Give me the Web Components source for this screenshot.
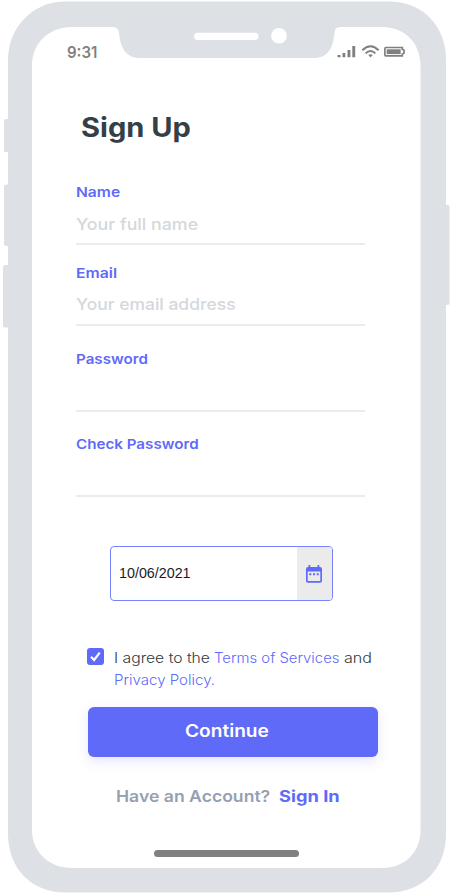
<!DOCTYPE html>
<html lang="en">
<head>
<meta charset="utf-8">
<title>Sign Up</title>
<style>
body { margin: 0; background: #fff; font-family: Inter, "Open Sans", sans-serif; }
</style>
</head>
<body>
<signup-page></signup-page>
<script>
/* A single run of text stretched horizontally to the width given in its "w" attribute. */
customElements.define('fit-text', class extends HTMLElement {
  connectedCallback() {
    const root = this.attachShadow({ mode: 'open' });
    root.innerHTML = `<style>
      :host { display: inline-block; vertical-align: top; white-space: nowrap; }
      span { display: inline-block; transform-origin: 0 50%; }
    </style><span><slot></slot></span>`;
    const span = root.querySelector('span'), w = parseFloat(this.getAttribute('w'));
    this.style.width = w + 'px';
    span.style.transform = `scaleX(${w / span.offsetWidth})`;
  }
});

customElements.define('phone-frame', class extends HTMLElement {
  constructor() {
    super();
    this.attachShadow({ mode: 'open' }).innerHTML = `<style>
      :host { display: block; position: relative; width: 453px; height: 896px; overflow: hidden; }
      svg { position: absolute; inset: 0; }
      .screen { position: relative; height: 100%; box-sizing: border-box; padding: 42px 32px 0; display: flex; flex-direction: column; }
      .home { flex: none; width: 145px; height: 7px; border-radius: 4px; background: #808080; margin: 42px 0 0 122px; }
    </style>
    <svg width="453" height="896" viewBox="0 0 453 896">
      <g fill="#dde1e6">
        <rect x="4" y="119" width="10" height="33" rx="1.5"/>
        <rect x="4" y="184.500" width="10" height="61.500" rx="2"/>
        <rect x="3" y="265" width="10" height="62.500" rx="2"/>
        <rect x="440" y="205" width="9.500" height="100" rx="2"/>
        <path d="M65 1.500H389C424 1.500 446 27 446 60V834C446 869 422 892.500 389 892.500H65C32 892.500 8 869 8 834V60C8 27 33 1.500 65 1.500Z"/>
      </g>
      <path fill="#fff" d="M72 27H112C117 27 118.500 29 119 33C120.500 48 126 58 140 58H314C328 58 333 48 334.500 33C335 29 336 27 341 27H382C405 27 420.500 43 420.500 66V830C420.500 852 405 868 382 868H72C49 868 32 852 32 830V66C32 43 49 27 72 27Z"/>
      <rect x="194" y="32.700" width="64.500" height="7.300" rx="3.650" fill="#fff"/>
      <circle cx="279" cy="35.800" r="7.800" fill="#fff"/>
    </svg>
    <div class="screen"><slot></slot><div class="home"></div></div>`;
  }
});

customElements.define('status-bar', class extends HTMLElement {
  constructor() {
    super();
    this.attachShadow({ mode: 'open' }).innerHTML = `<style>
      :host { display: flex; height: 20px; padding: 0 15px 0 35px; justify-content: space-between; color: #808080; font-size: 16px; line-height: 20px; font-weight: 600; }
      svg { flex: none; }
    </style>
    <fit-text w="30">9:31</fit-text>
    <svg width="70" height="20" viewBox="0 0 70 20" fill="#808080">
      <path d="M1.500 13h3v2.200h-3zM6.500 11h2.800v4.200H6.500zM11.500 8h2.900v7.200h-2.900zM16.300 4h2.900v11.200h-2.900z"/>
      <g fill="none" stroke="#808080" stroke-width="2">
        <path d="M26.300 8.300Q34.500 .2 42.600 8.300"/>
        <path d="M29.600 11.400Q34.500 6.600 39.400 11.400"/>
        <path d="M49.700 5.500H66.300V7.200L68 8.300V11L66.300 12.200V13.900H49.700Q48.900 13.900 48.900 13V6.400Q48.900 5.500 49.700 5.500Z" stroke-width="1.700"/>
      </g>
      <path d="M32.300 13Q34.500 11.700 36.700 13L34.500 15.400Z"/>
      <rect x="50.700" y="7.300" width="14" height="4.800"/>
    </svg>`;
  }
});

customElements.define('form-field', class extends HTMLElement {
  constructor() {
    super();
    this.attachShadow({ mode: 'open' }).innerHTML = `<style>
      :host { display: block; box-sizing: border-box; width: 289px; height: 63px; margin-left: 44px; border-bottom: 2px solid #ebebeb; }
      .label { height: 20px; font-size: 13.700px; line-height: 20px; font-weight: 570; color: #5f6af8; }
      .value { padding-top: var(--value-gap, 10px); font-size: 16.200px; line-height: 24px; font-weight: 500; color: #d4d8dd; }
    </style><div class="label"><slot name="label"></slot></div><div class="value"><slot></slot></div>`;
  }
});

customElements.define('date-field', class extends HTMLElement {
  constructor() {
    super();
    this.attachShadow({ mode: 'open' }).innerHTML = `<style>
      :host { display: flex; box-sizing: border-box; width: 223px; height: 55px; margin: 49px 0 0 77.500px; border: 1px solid #7882fa; border-radius: 4px; overflow: hidden; background: #fff; }
      .date { flex: 1; padding-left: 8.500px; font: 14.500px/52px "Liberation Sans", Arial, sans-serif; color: #1c1c1c; }
      .button { width: 34.500px; background: #ebebeb; display: flex; align-items: center; justify-content: center; }
    </style>
    <div class="date"><slot></slot></div>
    <div class="button"><svg width="18" height="20" viewBox="0 0 18 20">
      <path fill="#5f6af8" fill-rule="evenodd" d="M3.500 1H5.300V3H12.500V1H14.300V3H15Q17 3 17 5V16.700Q17 18.700 15 18.700H3Q1 18.700 1 16.700V5Q1 3 3 3H3.500ZM2.700 7.500V17H15.300V7.500Z"/>
      <path fill="#5f6af8" d="M4.300 9.200h2v2h-2zM8 9.200h2v2H8zM11.700 9.200h2v2h-2z"/>
    </svg></div>`;
  }
});

customElements.define('agree-row', class extends HTMLElement {
  constructor() {
    super();
    this.attachShadow({ mode: 'open' }).innerHTML = `<style>
      :host { display: flex; gap: 9.500px; height: 44px; margin: 46px 0 0 55px; font-size: 14px; line-height: 22px; font-weight: 300; color: #30383e; }
      svg { flex: none; margin-top: 1px; }
      .copy { display: flex; flex-direction: column; }
    </style>
    <svg width="17" height="17" viewBox="0 0 17 17"><rect width="17" height="17" rx="3" fill="#5f6af8"/><path d="M4 8.800L7.100 12L12.700 4.700" fill="none" stroke="#fff" stroke-width="2.200"/></svg>
    <div class="copy"><slot></slot></div>`;
  }
});

customElements.define('primary-button', class extends HTMLElement {
  constructor() {
    super();
    this.attachShadow({ mode: 'open' }).innerHTML = `<style>
      :host { display: block; flex: none; box-sizing: border-box; width: 290px; height: 50px; margin: 16px 0 0 56px; padding-left: 97px; border-radius: 6px; background: #5f6af8; box-shadow: 0 4px 12px rgba(95,106,248,.17); color: #fff; font-size: 17.300px; line-height: 48px; font-weight: 600; }
    </style><slot></slot>`;
  }
});

customElements.define('signup-page', class extends HTMLElement {
  constructor() {
    super();
    this.attachShadow({ mode: 'open' }).innerHTML = `<style>
      :host { display: block; }
      h1 { margin: 45px 0 35px 49px; height: 40px; font-size: 26.700px; line-height: 40px; font-weight: 650; color: #343f48; }
      .email { margin-top: 18px; --value-gap: 9px; }
      .password { margin-top: 23px; }
      .check { margin-top: 22px; }
      .link { color: #5f6af8; }
      .line { display: flex; gap: 4px; }
      .foot { display: flex; gap: 9px; height: 24px; margin: 27px 0 0 84px; font-size: 16px; line-height: 24px; font-weight: 570; color: #969fb0; }
      .foot .link { font-weight: 650; }
    </style>
    <phone-frame>
      <status-bar></status-bar>
      <h1><fit-text w="110">Sign Up</fit-text></h1>
      <form-field><fit-text slot="label" w="44.5">Name</fit-text><fit-text w="122">Your full name</fit-text></form-field>
      <form-field class="email"><fit-text slot="label" w="41.5">Email</fit-text><fit-text w="160">Your email address</fit-text></form-field>
      <form-field class="password"><fit-text slot="label" w="72">Password</fit-text></form-field>
      <form-field class="check"><fit-text slot="label" w="123">Check Password</fit-text></form-field>
      <date-field><fit-text w="72">10/06/2021</fit-text></date-field>
      <agree-row>
        <div class="line"><fit-text w="96.500">I agree to the</fit-text><fit-text w="125.500" class="link">Terms of Services</fit-text><fit-text w="27.500">and</fit-text></div>
        <fit-text w="101" class="link">Privacy Policy.</fit-text>
      </agree-row>
      <primary-button><fit-text w="84">Continue</fit-text></primary-button>
      <div class="foot"><fit-text w="154">Have an Account?</fit-text><fit-text w="60.5" class="link">Sign In</fit-text></div>
    </phone-frame>`;
  }
});
</script>
</body>
</html>
